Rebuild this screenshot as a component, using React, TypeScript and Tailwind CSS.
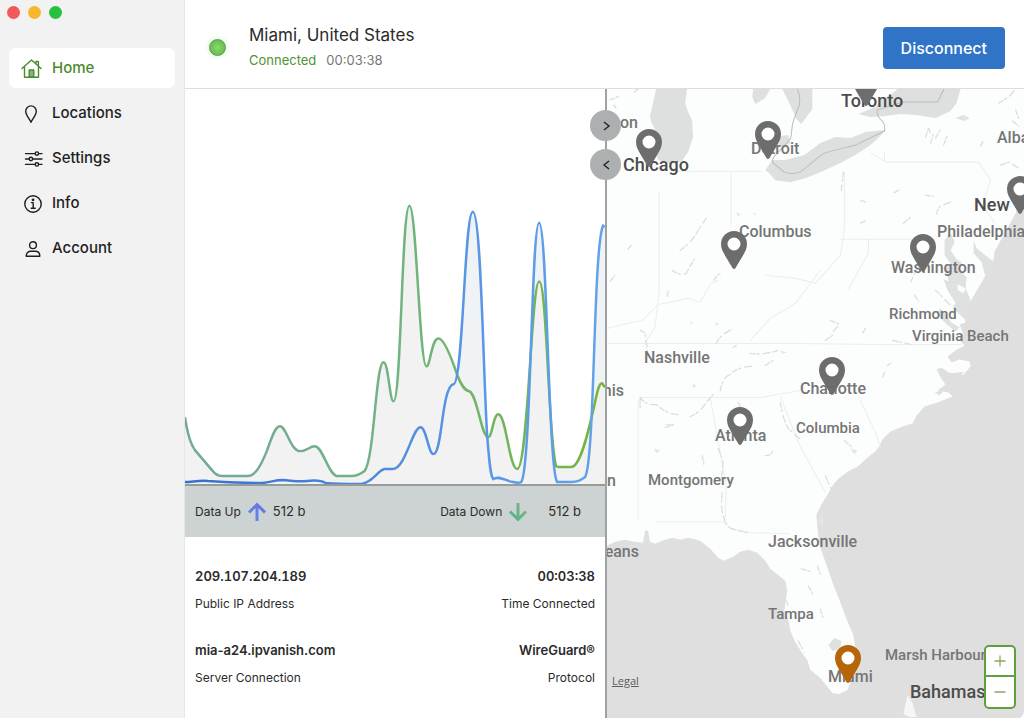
import React from 'react';
import clsx from 'clsx';

interface NavItem {
  label: string;
  icon: React.ReactNode;
  active?: boolean;
}

interface MapLabel {
  name: string;
  x: number;
  y: number;
  size?: 'small' | 'large';
  alignEnd?: boolean;
}

interface MapPin {
  city: string;
  x: number;
  y: number;
  current?: boolean;
}

const Icon: React.FC<{ children: React.ReactNode }> = ({ children }) => (
  <svg
    viewBox="0 0 22 22"
    className="size-[22px] shrink-0"
    fill="none"
    stroke="currentColor"
    strokeWidth="1.4"
    strokeLinecap="round"
    strokeLinejoin="round"
    aria-hidden="true"
  >
    {children}
  </svg>
);

const navItems: NavItem[] = [
  {
    label: 'Home',
    active: true,
    icon: (
      <Icon>
        <path d="M1 10.5 10.5 2 20 10.5M3.5 8.8v10.4h14V8.8M15 6V3.5h2.4v4.7" />
        <path d="M8.2 19v-7h4.6v7z" fill="currentColor" fillOpacity="0.65" />
      </Icon>
    ),
  },
  {
    label: 'Locations',
    icon: (
      <Icon>
        <path d="M10 19.3C8.8 16 4.7 12.2 4.7 8.2a5.3 5.3 0 0 1 10.6 0c0 4-4.1 7.8-5.3 11.1z" />
      </Icon>
    ),
  },
  {
    label: 'Settings',
    icon: (
      <Icon>
        <path d="M4.5 5.6h9.6M17.700 5.6h3.3M4.5 11h3.6M11.700 11h9.3M4.5 16.4h9.6M17.700 16.4h3.3" />
        <circle cx="15.9" cy="5.6" r="1.7" />
        <circle cx="9.9" cy="11" r="1.7" />
        <circle cx="15.9" cy="16.4" r="1.7" />
      </Icon>
    ),
  },
  {
    label: 'Info',
    icon: (
      <Icon>
        <circle cx="12" cy="11" r="8.2" />
        <path d="M10.4 9.6h1.8v5.6M10.2 15.3h4" />
        <circle cx="12" cy="6.8" r="0.7" fill="currentColor" />
      </Icon>
    ),
  },
  {
    label: 'Account',
    icon: (
      <Icon>
        <circle cx="12" cy="7.2" r="3.4" />
        <path d="M5.2 18.2c0-3.2 2.2-4.9 4.6-4.9h4.4c2.4 0 4.6 1.7 4.6 4.9z" />
      </Icon>
    ),
  },
];

const mapLabels: MapLabel[] = [
  { name: 'Toronto', x: 234, y: 12, size: 'large' },
  { name: 'Madison', x: 31, y: 34, alignEnd: true },
  { name: 'Chicago', x: 16, y: 76, size: 'large' },
  { name: 'Detroit', x: 144, y: 60 },
  { name: 'Albany', x: 390, y: 49 },
  { name: 'New York', x: 367, y: 116, size: 'large' },
  { name: 'Columbus', x: 132, y: 143 },
  { name: 'Philadelphia', x: 330, y: 143 },
  { name: 'Washington', x: 284, y: 179 },
  { name: 'Richmond', x: 282, y: 225, size: 'small' },
  { name: 'Virginia Beach', x: 305, y: 247, size: 'small' },
  { name: 'Nashville', x: 37, y: 269 },
  { name: 'Memphis', x: 17, y: 302, alignEnd: true },
  { name: 'Charlotte', x: 193, y: 300 },
  { name: 'Columbia', x: 189, y: 339, size: 'small' },
  { name: 'Atlanta', x: 108, y: 347 },
  { name: 'Montgomery', x: 41, y: 391, size: 'small' },
  { name: 'Jackson', x: 9, y: 392, alignEnd: true },
  { name: 'Jacksonville', x: 161, y: 453 },
  { name: 'New Orleans', x: 32, y: 463, alignEnd: true },
  { name: 'Tampa', x: 161, y: 525, size: 'small' },
  { name: 'Miami', x: 221, y: 588 },
  { name: 'Marsh Harbour', x: 278, y: 566, size: 'small' },
  { name: 'Bahamas', x: 303, y: 603, size: 'large' },
];

// x / y is the tip of the pin
const mapPins: MapPin[] = [
  { city: 'Toronto', x: 259, y: 17 },
  { city: 'Chicago', x: 42, y: 78 },
  { city: 'Detroit', x: 161, y: 70 },
  { city: 'Columbus', x: 127, y: 180 },
  { city: 'Washington', x: 316, y: 183 },
  { city: 'New York', x: 413, y: 125 },
  { city: 'Charlotte', x: 225, y: 306 },
  { city: 'Atlanta', x: 133, y: 356 },
  { city: 'Miami', x: 241, y: 594, current: true },
];

const Sidebar: React.FC = () => (
  <aside className="w-[185px] shrink-0 border-r border-[#e6e6e6] bg-[#f2f2f2]">
    <div className="flex gap-2 px-[7px] pt-[6px]">
      <span className="size-[13px] rounded-full bg-[#f2595b]" />
      <span className="size-[13px] rounded-full bg-[#f6b72b]" />
      <span className="size-[13px] rounded-full bg-[#27c13f]" />
    </div>
    <nav className="mt-[29px] flex flex-col gap-[5px] px-[9px]">
      {navItems.map((item) => (
        <a
          key={item.label}
          href="#"
          className={clsx(
            'flex h-10 items-center gap-[9px] rounded-md px-3 pt-px text-[15px] font-medium',
            item.active ? 'bg-white text-[#4b8b2c]' : 'text-[#1f1f1f]'
          )}
        >
          {item.icon}
          {item.label}
        </a>
      ))}
    </nav>
  </aside>
);

const Header: React.FC = () => (
  <header className="flex h-[89px] shrink-0 items-center border-b border-[#dcdede] bg-white pr-[19px] pl-6">
    <span className="mt-[6px] size-[17px] rounded-full border border-[#5c9b4a] bg-radial from-[#86dd6c] to-[#5faf45] shadow-[0_0_6px_#d5f0cc]" />
    <div className="ml-[23px] flex-1 pt-2">
      <h1 className="text-[17px] leading-6 text-[#2a2a2a]">Miami, United States</h1>
      <p className="flex gap-[10px] text-[13px] leading-[26px]">
        <span className="text-[#4f9131]">Connected</span>
        <span className="text-[#777777]">00:03:38</span>
      </p>
    </div>
    <button type="button" className="mt-[7px] h-[42px] rounded bg-[#2f74c6] px-[18px] text-base font-medium text-white">
      Disconnect
    </button>
  </header>
);

const upLine =
  'M185 418C187 432 190 444 195 451C201 458 206 464 212 471C215 475 218 477 222 477H248C256 477 262 464 267 452C271 441 275 427 280 427C287 427 290 452 301 452C307 452 310 447 315 447C323 447 328 474 337 477H352C357 477 361 475 365 472C375 459 376 363 384 363C389 363 390 402 394 402C402 402 402 206 410 206C417 206 420 367 427 367C431 367 432 339 439 339C445 339 453 361 458 376C462 386 465 391 470 392C478 395 482 438 489 438C493 438 494 415 499 415C507 415 510 470 518 470C529 470 532 282 540 282C548 282 549 440 557 467C558 468 560 468 562 468H572C582 468 590 428 594 412C597 400 599 384 603 384L606 388';
const downLine =
  'M185 483C192 483 200 481 208 482C225 483 240 484 262 484C272 483 275 481 283 481C295 482 300 483 307 482C315 481 321 481 326 484C335 485 350 485 362 485C375 482 377 472 385 470H393C406 470 413 428 421 428C427 428 429 455 434 455C443 455 442 388 454 385C464 385 465 212 473.500 212C482 212 484 380 488 438C490 462 491 477 494 480C500 476 506 482 514 483C518 484 520 484 522 483C532 470 532 223 540 223C548 223 549 470 558 483H572C579 483 582 481 586 478C596 462 594 250 604 226L606 227';

const TrafficChart: React.FC = () => (
  <svg viewBox="185 89 421 396" preserveAspectRatio="none" className="h-0 min-h-[260px] w-full flex-1" role="img" aria-label="Traffic">
    <defs>
      <linearGradient id="up" x1="185" x2="606" y1="0" y2="0" gradientUnits="userSpaceOnUse">
        <stop offset="0" stopColor="#74a79c" />
        <stop offset="0.5" stopColor="#70b482" />
        <stop offset="1" stopColor="#74b53a" />
      </linearGradient>
      <linearGradient id="down" x1="185" x2="606" y1="0" y2="0" gradientUnits="userSpaceOnUse">
        <stop offset="0" stopColor="#3470cc" />
        <stop offset="0.6" stopColor="#5692e4" />
        <stop offset="1" stopColor="#62a3ea" />
      </linearGradient>
    </defs>
    <path d={`${downLine}V486H185Z`} fill="#f0f3f6" />
    <path d={`${upLine}V486H185Z`} fill="#f2f2f2" />
    <path d={upLine} fill="none" stroke="url(#up)" strokeWidth="2.500" />
    <path d={downLine} fill="none" stroke="url(#down)" strokeWidth="2.500" />
  </svg>
);

const DataArrow: React.FC<{ down?: boolean }> = ({ down }) => (
  <svg viewBox="0 0 20 20" className="size-5" fill="none" strokeWidth="3" aria-hidden="true">
    <defs>
      <linearGradient id={down ? 'arrow-down' : 'arrow-up'} x1="0" x2="20" y1="20" y2="0" gradientUnits="userSpaceOnUse">
        <stop offset="0" stopColor={down ? '#45b58e' : '#5b8ff0'} />
        <stop offset="1" stopColor={down ? '#8fb07c' : '#6d6de0'} />
      </linearGradient>
    </defs>
    {down ? (
      <path d="M10.01 1 10 17M2 9.500l8 8 8-8" stroke="url(#arrow-down)" />
    ) : (
      <path d="M10.01 19 10 3M2 10.500l8-8 8 8" stroke="url(#arrow-up)" />
    )}
  </svg>
);

const StatsPanel: React.FC = () => (
  <section className="flex w-[422px] shrink-0 flex-col border-r-2 border-[#9fa2a2] bg-white text-xs text-[#2b2b2b]">
    <TrafficChart />
    <div className="flex h-[53px] items-center justify-between border-t-2 border-[#969b9c] bg-[#cdd2d3] pr-6 pl-[10px]">
      <div className="flex items-center">
        <span className="mr-[6px]">Data Up</span>
        <DataArrow />
        <span className="ml-[6px] text-[13px]">512 b</span>
      </div>
      <div className="flex items-center">
        <span className="mr-[6px]">Data Down</span>
        <DataArrow down />
        <span className="ml-5 text-[13px]">512 b</span>
      </div>
    </div>
    <dl className="grid grid-cols-2 gap-y-5 px-[10px] pt-[26px] pb-7 leading-[27px] [&>div]:flex [&>div]:flex-col-reverse [&>div:nth-child(even)]:text-right">
      <div>
        <dt>Public IP Address</dt>
        <dd className="text-[13px] font-semibold tabular-nums">209.107.204.189</dd>
      </div>
      <div>
        <dt>Time Connected</dt>
        <dd className="text-[13px] font-semibold tabular-nums">00:03:38</dd>
      </div>
      <div>
        <dt>Server Connection</dt>
        <dd className="text-[13px] font-semibold">mia-a24.ipvanish.com</dd>
      </div>
      <div>
        <dt>Protocol</dt>
        <dd className="text-[13px] font-semibold">WireGuard®</dd>
      </div>
    </dl>
  </section>
);

const MapTerrain: React.FC = () => (
  <svg viewBox="607 89 417 629" preserveAspectRatio="xMinYMin slice" className="absolute inset-0 size-full" aria-hidden="true">
    {/* ocean */}
    <path
      fill="#dfdfdf"
      d="M607 545l8-4 10-2 10 2 8 1 2-12 3 0 2 11 5 2 10-4 7-2 8 2 8-2 12 3 10 8 8 9 5 3 10-4 7-5 8-2 9 3 8 8 5 8 10 8 5 4 2 10-2 13-1 8 4 7 2 12 5 11 8 13 4 5 3 10 10 8 8 10 4 5 7 1 8-4 7-18 2-17-3-20-7-16-7-19-6-15-7-20-7-20-2-17-1-13 5-10 6-10 5-9 6-7 9-7 10-5 10-9 8-6 4-6 3-6 8-8 12-5 10-3 4-8 8-9 13-4 15-6-4-4-11-2 8-6-5-7-4-8 5-2 7 5 15 2 7-8-1-5-10-2-8 3-4-6 8-6 9-5-5-5 3-8-3-8 6-2-2-9 14-24 8-14 7-10 2-14 11-20 10-18 4-14 5-10V718H607z"
    />
    {/* Bahamas */}
    <path fill="#f6f6f6" d="M903 713l4-19 5 8 4 14-7 0z" />
    {/* Chesapeake and Delaware bays, Okeechobee, sounds */}
    <g fill="#dfe1e1">
      <path d="M944 240l6-8 4 10-4 8 6 9 5 3-1 9 6 6-1 11 5 12-6 19-12-12 3-4-8-13-4-11 5 2-3-12 5-6-6-8z" />
      <path d="M973 240l3 8 10 8 8 6-4 15-6-3-3-12-8-9z" />
      <path d="M828 644l6-7 7 3-1 8-8 2z" />
      <path d="M940 308l11 14 8 5-4 4-10-8-9-10zM950 373l14-2-6 5zM934 392l10-3-5 6z" />
    </g>
    <path fill="#fbfcfc" d="M957 284l8 4-2 5-6-3zM962 250l9 8 10 14-4 10-10-4-5-14z" />
    {/* Great Lakes */}
    <g fill="#dee0e0">
      <path d="M656 89l-3 14-3 12 1 7 4 8-2 15 5 15 12 4 12-3 6-9 5-15-1-17-4-8-3-9 2-14z" />
      <path d="M753 89h17l-5 9-10 6-3-7z" />
      <path d="M782 89h30v20l-11 15-5-5-6-14-5-10z" />
      <path d="M780 136l8-1 2 8-6 5-6-3z" />
      <path d="M765 170l7-10 13 0 19-5 16-12 15-6 15 1 15-6 20-2-7 8-8 7-15 10-15 8-20 9-15 6-15 4-15-2-7-8z" />
      <path d="M858 114l17-7 5-7 10-5 7-6h63l-4 14-6 8-15 7-20-3-15-1-15 2-15 1z" />
      <path d="M955 118l8-3 6 3-5 3z" />
    </g>
    {/* borders */}
    <path
      fill="none"
      stroke="#b9bcbc"
      strokeWidth="1"
      d="M797 89c3 6 3 10 2 16l-6 16c-2 6-1 12-3 18l-14 15c-3 3-5 6-3 9l11 9c5 2 10 2 16 0l22-18c10-4 22-6 33-9l29-14c1-4 0-7-2-10-5-4-6-7-5-11l25-8h35l7-14"
    />
    <g fill="none" stroke="#e9eeee" strokeWidth="1">
      <path d="M672 171h90M731 172v54M659 192v100l-4 34-12 20M884 162v-10M870 153l16 9h92l12 18-8 25 12 18M844 171v58l-4 26-25 28-20-5-30-3M840 239h94M868 239v14l-20 36M607 343h190l80 1h84M640 397h120l40-7M638 400v120M710 397l16 88-1 36H656M725 521l5 7 20 4 40 1M780 396l18 46 27 50M860 400l16 34 4 14" />
      <path d="M607 328l20-5 15-3 16-16 12-2 18-4 12 4 10-18 8-4M820 270l-25 33-25 15-20 22" />
    </g>
    {/* rivers and reservoirs */}
    <g fill="none" stroke="#dadede" strokeWidth="1.300" strokeLinecap="round" strokeDasharray="5 2 2 4 7 3">
      <path d="M640 330q7 2 5 8 3 8 2 18M672 270q8 6 14 3l8-14M680 250q12-8 18-20l8-12M628 249l4-5M610 281l5-6M714 280q2-6 8-7M716 343q4-9 16-14M736 345l-3 2M750 353q12 2 28-3M765 365l8-5M720 390q3-14 10-16 8-8 22-8" />
      <path d="M640 397q6 8 16 7 12 10 22 10M690 416q10-4 16-14l8-9M640 398v12M665 427l10-3M702 455l2 10M718 448l5 12-2 20M722 492q-2 16 2 26 1 8 8 10l15 4M780 402q3 18 8 26l11 10M765 455q8 0 8-8M738 402l5 10" />
      <path d="M925 137l3-9M930 143l4-12M935 138l5-9M943 145l4-10M928 128l2 5M843 172l-2 18M865 221l-6 2M903 223l7-6M936 214q2-9 6-9l10-4M980 146l3-6M998 103l10-6 6-7M1012 121l6 5M1000 165l8-3 10 6M1015 110l3 8M860 200l6 2M898 190l-5 3M925 195l8 1" />
      <path d="M610 100l10-4M634 92l5-4M614 105l2 3M668 291l-1 5M825 340l10-7M830 320l9 4-6 7M865 328l-3 5M884 372l-2 5M890 363l-3 2M892 340l18 4M844 440l9 8M914 295l4 6M935 290l16 16M922 256l-12 26M825 475l6 14" />
      <path d="M801 568l10 3M808 585l5 9M817 565l3 8M820 608l3 10M842 588l-4 6M798 640l6 12M786 600l2 6" />
    </g>
    <g fill="#e3e6e6">
      <path d="M818 520l4-8 1 14zM850 448l7 2-3 4zM664 424l10-1-4 3zM960 117l7 1-3 3zM736 212l4 2-2 3zM753 212l3 2-2 1zM693 383l4 3-5 1zM654 448l6 2-4 3zM780 350l7 2-5 1zM690 321l3 1-2 2zM715 321l4 3-3 1z" />
    </g>
  </svg>
);

const Pin: React.FC<{ pin: MapPin }> = ({ pin }) => (
  <button
    type="button"
    aria-label={pin.city}
    className={clsx(
      'absolute h-[38px] w-[26px] -translate-x-1/2 -translate-y-full',
      pin.current ? 'text-[#b5650a]' : 'text-[#6d6d6d]'
    )}
    style={{ left: pin.x, top: pin.y }}
  >
    <svg viewBox="0 0 26 38" className="size-full" fill="currentColor" fillRule="evenodd" aria-hidden="true">
      <circle cx="13" cy="13" r="7" fill="#fff" />
      <path d="M13 0a13 13 0 0 1 13 13c0 4.500-2 8-4 11.500L14.500 37q-1.500 2-3 0L4 24.500C2 21 0 17.500 0 13A13 13 0 0 1 13 0zm0 6.500a6.500 6.500 0 1 0 0 13 6.500 6.500 0 0 0 0-13z" />
    </svg>
  </button>
);

const ServerMap: React.FC = () => (
  <section className="relative flex-1 font-[Roboto,sans-serif]">
    <div className="absolute inset-0 overflow-hidden rounded-br-lg bg-[#fcfdfd]">
      <MapTerrain />
      {mapLabels.map((label) => (
        <span
          key={label.name}
          className={clsx(
            'absolute -translate-y-1/2 font-medium whitespace-nowrap leading-5',
            label.size === 'large' && 'text-[18px] text-[#4c4c4c]',
            label.size === 'small' && 'text-[15px] text-[#757575]',
            !label.size && 'text-[16px] text-[#757575]',
            label.alignEnd && '-translate-x-full'
          )}
          style={{ left: label.x, top: label.y }}
        >
          {label.name}
        </span>
      ))}
      {mapPins.map((pin) => (
        <Pin key={pin.city} pin={pin} />
      ))}
      <a href="#" className="absolute bottom-8 left-[5px] font-['Open_Sans',sans-serif] text-[11px] leading-3 text-[#5c5c5c] underline">
        Legal
      </a>
      <div className="absolute right-2 bottom-[10px] flex w-8 flex-col divide-y-2 divide-[#5da03c] rounded-[5px] border-2 border-[#5da03c] bg-white text-[#8aa860]">
        <button type="button" aria-label="Zoom in" className="flex h-[30px] items-center justify-center">
          <svg viewBox="0 0 12 12" className="size-3" stroke="currentColor" strokeWidth="1.300">
            <path d="M6 .5v11M.5 6h11" />
          </svg>
        </button>
        <button type="button" aria-label="Zoom out" className="flex h-[30px] items-center justify-center">
          <svg viewBox="0 0 12 12" className="size-3" stroke="currentColor" strokeWidth="1.300">
            <path d="M.5 6h11" />
          </svg>
        </button>
      </div>
    </div>
    <div className="absolute top-[21px] -left-[17px] flex flex-col gap-2 text-[#222222]">
      {['M4 2l5 4-5 4', 'M9 2L4 6l5 4'].map((d, index) => (
        <button
          key={d}
          type="button"
          aria-label={index === 0 ? 'Expand chart' : 'Collapse chart'}
          className="flex size-[31px] items-center justify-center rounded-full bg-[#adb0b0]"
        >
          <svg viewBox="0 0 12 12" className="size-3" fill="none" stroke="currentColor" strokeWidth="1.400">
            <path d={d} />
          </svg>
        </button>
      ))}
    </div>
  </section>
);

const App: React.FC = () => {
  return (
    <div className="flex min-h-screen bg-white font-[Inter,sans-serif]">
      <Sidebar />
      <main className="flex min-w-0 flex-1 flex-col">
        <Header />
        <div className="flex flex-1 pb-px">
          <StatsPanel />
          <ServerMap />
        </div>
      </main>
    </div>
  );
};

export default App;
